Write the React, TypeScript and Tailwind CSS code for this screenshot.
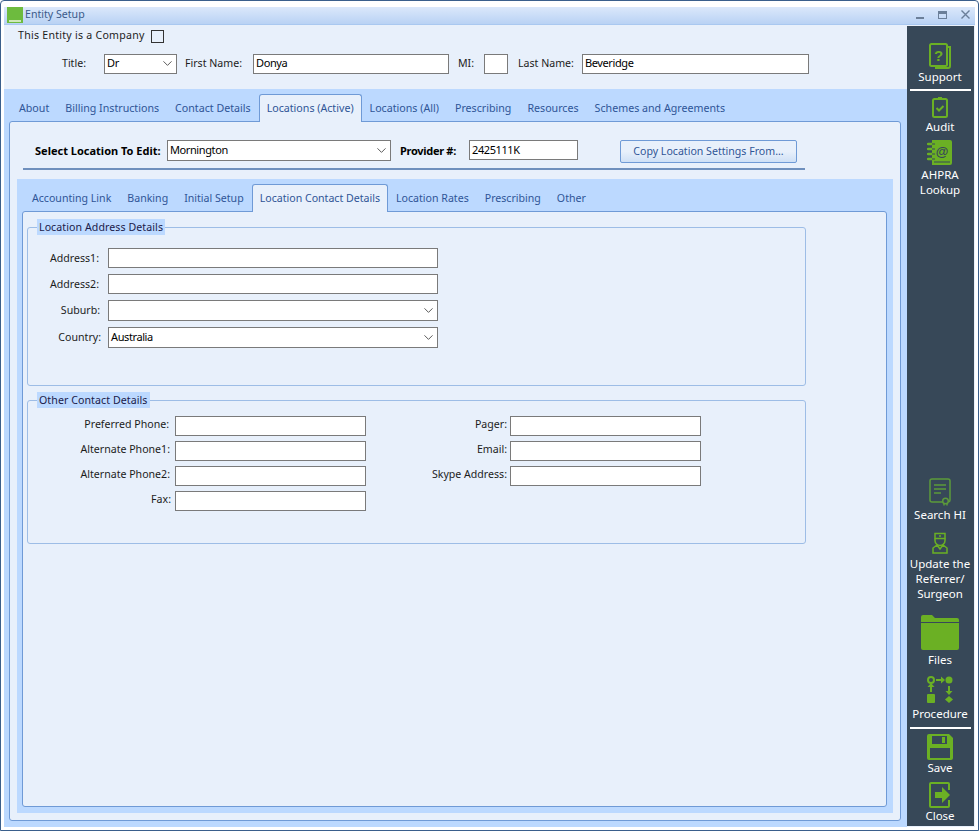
import { ChevronDown } from "lucide-react";

const tabCls = "px-2 pt-[2px] h-[27px] flex items-center text-[#2f5597]";
const activeTabCls =
  "px-[7px] pt-px h-[28px] -mb-px flex items-center text-[#2f5597] bg-[#e8f0fb] border border-b-0 border-[#6f9ad6] rounded-t-[3px] relative";

function Tabs({ items, active, className = "" }: { items: string[]; active: string; className?: string }) {
  return (
    <div className={`flex items-end pl-[2px] h-[27px] relative z-10 ${className}`}>
      {items.map((t) =>
        t === active ? (
          <div key={t} className={activeTabCls}>
            {t}
          </div>
        ) : (
          <div key={t} className={tabCls}>
            {t}
          </div>
        ),
      )}
    </div>
  );
}

function Input({ w, value, h = "h-5" }: { w: string; value?: string; h?: string }) {
  return (
    <div
      className={`${w} ${h} shrink-0 bg-white border border-[#7a7a7a] flex items-center pl-[2px] font-['Liberation_Sans',Arial,sans-serif] text-[11px] tracking-[-0.4px] text-black`}
    >
      {value}
    </div>
  );
}

function Select({ w, value, h = "h-[21px]" }: { w: string; value?: string; h?: string }) {
  return (
    <div
      className={`${w} ${h} shrink-0 bg-white border border-[#7a7a7a] flex items-center justify-between pl-[2px] pr-[1px] font-['Liberation_Sans',Arial,sans-serif] text-[11px] tracking-[-0.4px] text-black`}
    >
      <span>{value}</span>
      <ChevronDown size={15} strokeWidth={1.4} className="text-[#444]" />
    </div>
  );
}

function Field({ label, children, lw }: { label: string; children: React.ReactNode; lw: string }) {
  return (
    <div className="flex items-center">
      <div className={`${lw} text-right whitespace-nowrap`}>{label}</div>
      {children}
    </div>
  );
}

function Group({ title, className, children }: { title: string; className: string; children: React.ReactNode }) {
  return (
    <fieldset className={`border border-[#9dbde6] rounded-[3px] ml-[4px] w-[779px] ${className}`}>
      <legend className="ml-[9px] h-4 px-[2px] bg-[#bcd9ff] leading-4 text-[#1a1a4a] tracking-[0.08px]">{title}</legend>
      {children}
    </fieldset>
  );
}

const G = "#6bb024";

function Support() {
  return (
    <svg width="22" height="26" viewBox="0 0 22 26" fill="none" stroke={G} strokeWidth="2">
      <path d="M18 4h3v19a2 2 0 0 1-2 2H7v-2" />
      <rect x="1" y="1" width="17" height="22" rx="1.5" />
      <text x="9.5" y="18" fontSize="15" fontWeight="700" textAnchor="middle" fill={G} stroke="none" fontFamily="Liberation Sans">?</text>
    </svg>
  );
}
function Audit() {
  return (
    <svg width="16" height="22" viewBox="0 0 16 22" fill="none" stroke={G} strokeWidth="2">
      <rect x="1" y="3" width="14" height="18" rx="1.5" />
      <path d="M6 2.5h4" strokeWidth="3" />
      <path d="M4.5 12l2.5 2.5 4.500-4.500" />
    </svg>
  );
}
function Ahpra() {
  return (
    <svg width="26" height="27" viewBox="0 0 26 27">
      <path d="M5 1h18a2 2 0 0 1 2 2v21a2 2 0 0 1-2 2H5z" fill={G} />
      <path d="M23 23H7" stroke="#374858" strokeWidth="1" />
      <path d="M1 5h6M1 10h6M1 15h6M1 20h6" stroke={G} strokeWidth="2.5" strokeLinecap="round" />
      <path d="M5 5h3M5 10h3M5 15h3M5 20h3" stroke="#374858" strokeWidth="1" />
      <text x="15" y="17" fontSize="13" fontWeight="700" textAnchor="middle" fill="#374858" fontFamily="Liberation Sans">@</text>
    </svg>
  );
}
function SearchHi() {
  return (
    <svg width="22" height="28" viewBox="0 0 22 28" fill="none" stroke="#5c9a3a" strokeWidth="1.5">
      <path d="M14 24H3a2 2 0 0 1-2-2V3a2 2 0 0 1 2-2h16a2 2 0 0 1 2 2v19a2 2 0 0 1-1.5 2" />
      <path d="M5 7h12M5 11h12M5 15h7" />
      <circle cx="16.5" cy="23" r="2.8" />
      <path d="M15 26v1.500M18 26v1.500" />
    </svg>
  );
}
function Surgeon() {
  return (
    <svg width="16" height="22" viewBox="0 0 16 22" fill="none" stroke={G} strokeWidth="1.5">
      <path d="M3 1.500h10v5H3z" />
      <path d="M3 6.500v2a5 5 0 0 0 10 0v-2" />
      <circle cx="8" cy="4" r="1" fill={G} stroke="none" />
      <path d="M5 13l-4 3v5h14v-5l-4-3-3 4z" />
    </svg>
  );
}
function Folder() {
  return (
    <svg width="38" height="36" viewBox="0 0 38 36" fill={G}>
      <path d="M0 3a2 2 0 0 1 2-2h9l3 3h22a2 2 0 0 1 2 2v2H0z" />
      <path d="M0 9h38v25a2 2 0 0 1-2 2H2a2 2 0 0 1-2-2z" />
    </svg>
  );
}
function Procedure() {
  return (
    <svg width="28" height="27" viewBox="0 0 28 27" fill={G}>
      <circle cx="5" cy="4" r="3" fill="none" stroke={G} strokeWidth="2" />
      <circle cx="23" cy="4" r="3.5" />
      <path d="M10 3h5V0.5l4 3.500-4 3.500V5h-5z" />
      <path d="M22 10h2v5h2.500l-3.500 4-3.500-4H22z" />
      <path d="M23 20l4 3.500-4 3.500-4-3.500z" />
      <path d="M4 16v-5H1.500l3.500-4 3.500 4H6v5z" />
      <rect x="1" y="18" width="8" height="9" rx="1" />
    </svg>
  );
}
function Save() {
  return (
    <svg width="26" height="26" viewBox="0 0 26 26">
      <path d="M2 0h20l4 4v20a2 2 0 0 1-2 2H2a2 2 0 0 1-2-2V2a2 2 0 0 1 2-2z" fill={G} />
      <rect x="5" y="2" width="15" height="8" fill="#374858" />
      <rect x="15" y="3" width="3" height="6" fill={G} />
      <rect x="3" y="14" width="20" height="10" fill="#374858" />
    </svg>
  );
}
function Close() {
  return (
    <svg width="22" height="26" viewBox="0 0 22 26" fill="none">
      <path d="M20 8V2a1 1 0 0 0-1-1H2a1 1 0 0 0-1 1v22a1 1 0 0 0 1 1h17a1 1 0 0 0 1-1v-6" stroke={G} strokeWidth="2" />
      <path d="M6 10h7V5l8 8-8 8v-5H6z" fill={G} />
    </svg>
  );
}

function SideItem({ icon, label, className }: { icon: React.ReactNode; label: React.ReactNode; className: string }) {
  return (
    <div className={`flex flex-col items-center text-center leading-[15px] text-white ${className}`}>
      {icon}
      {label}
    </div>
  );
}

export default function App() {
  return (
    <div className="w-[979px] h-[831px] border border-[#3a5f8c] rounded-t-[4px] bg-white pt-[6px] px-[3px] pb-[3px] flex flex-col font-['Noto_Sans',sans-serif] text-[10.6px] text-[#1c1c1c] overflow-hidden">
      {/* title bar */}
      <div className="h-[18px] shrink-0 flex items-center bg-gradient-to-b from-[#dbe8fb] to-[#b9d2f4] border-b border-[#a9c8f0] pl-[3px] pr-[5px] pb-[2px]">
        <div className="w-4 h-4 shrink-0 bg-[#6dbb3e] flex items-end justify-center">
          <div className="w-3 h-[2px] mb-px bg-[#cfe8b8]" />
        </div>
        <span className="ml-[2px] text-[#3a5a8a]">Entity Setup</span>
        <div className="ml-auto flex items-center gap-[14px]">
          <div className="w-2 h-[2px] bg-[#6b7f99] mt-[6px]" />
          <div className="w-[9px] h-2 border border-[#6b7f99] border-t-[3px]" />
          <svg width="9" height="9" viewBox="0 0 9 9" stroke="#6b7f99" strokeWidth="1.4">
            <path d="M0.5 0.5l8 8M8.5 0.5l-8 8" />
          </svg>
        </div>
      </div>

      <div className="flex-1 flex bg-[#e8f0fb] min-h-0 pt-px">
        <div className="flex-1 flex flex-col min-w-0 -mt-px">
          {/* entity header */}
          <div className="h-[64px] shrink-0">
            <div className="flex items-center pl-[14px] h-[22px]">
              <span className="tracking-[0.25px]">This Entity is a Company</span>
              <div className="w-[13px] h-[13px] ml-[6px] mt-px bg-[#e8f0fb] border border-[#333]" />
            </div>
            <div className="flex items-center mt-[6px] h-[21px]">
              <span className="ml-[58px] w-[42px]">Title:</span>
              <Select w="w-[73px]" value="Dr" h="h-5" />
              <span className="ml-2 w-[68px]">First Name:</span>
              <Input w="w-[196px]" value="Donya" />
              <span className="ml-[9px] w-[26px]">MI:</span>
              <Input w="w-6" />
              <span className="ml-[10px] w-[64px] pt-px">Last Name:</span>
              <Input w="w-[227px]" value="Beveridge" />
            </div>
          </div>

          {/* outer tabs */}
          <div className="flex-1 min-h-0 flex flex-col bg-[#bcd9ff] pl-[5px] pr-[6px] pt-[5px] pb-[6px]">
            <Tabs
              className="text-[10.66px]"
              active="Locations (Active)"
              items={["About", "Billing Instructions", "Contact Details", "Locations (Active)", "Locations (All)", "Prescribing", "Resources", "Schemes and Agreements"]}
            />
            <div className="flex-1 min-h-0 flex flex-col bg-[#e8f0fb] border border-[#6f9ad6] rounded-[3px] px-[7px] pb-[7px]">
              <div className="h-[48px] shrink-0 mx-[6px] w-[782px] border-b-2 border-[#6f90bd] flex items-start pt-[18px]">
                <span className="ml-3 w-[132px] font-bold text-black font-['Liberation_Sans',Arial,sans-serif] text-[11px] leading-[21px]">Select Location To Edit:</span>
                <Select w="w-[224px]" value="Mornington" />
                <span className="ml-[9px] w-[69px] font-bold text-black font-['Liberation_Sans',Arial,sans-serif] text-[11px] tracking-[-0.3px] leading-[21px]">Provider #:</span>
                <Input w="w-[109px]" value="2425111K" />
                <button className="ml-[42px] w-[177px] h-[23px] rounded-[2px] border border-[#6f9ad6] bg-gradient-to-b from-[#e8f0fb] via-[#e8f0fb] to-[#cfe0f6] text-[#2f5597]">
                  Copy Location Settings From...
                </button>
              </div>

              {/* inner tabs */}
              <div className="flex-1 min-h-0 mt-[9px] flex flex-col bg-[#bcd9ff] pl-[5px] pr-[6px] pt-[5px] pb-[6px]">
                <Tabs
                  active="Location Contact Details"
                  items={["Accounting Link", "Banking", "Initial Setup", "Location Contact Details", "Location Rates", "Prescribing", "Other"]}
                />
                <div className="flex-1 min-h-0 bg-[#e8f0fb] border border-[#6f9ad6] rounded-[3px] pt-[7px]">
                  <Group title="Location Address Details" className="h-[167px]">
                    <div className="flex flex-col gap-[6px] pt-[13px]">
                      <Field label="Address1:" lw="w-[72px] pr-[1px] pt-px">
                        <Input w="w-[330px] ml-[8px]" />
                      </Field>
                      <Field label="Address2:" lw="w-[72px] pr-[1px] pt-px">
                        <Input w="w-[330px] ml-[8px]" />
                      </Field>
                      <Field label="Suburb:" lw="w-[72px] pt-px">
                        <Select w="w-[330px] ml-[8px]" />
                      </Field>
                      <Field label="Country:" lw="w-[73px]">
                        <Select w="w-[330px] ml-[7px]" value="Australia" />
                      </Field>
                    </div>
                  </Group>
                  <Group title="Other Contact Details" className="h-[152px] mt-[6px]">
                    <div className="grid grid-cols-[338px_auto] justify-start gap-y-[5px] pt-[8px]">
                      <Field label="Preferred Phone:" lw="w-[141px] pb-[2px]">
                        <Input w="w-[191px] ml-[6px]" />
                      </Field>
                      <Field label="Pager:" lw="w-[141px] pb-[2px]">
                        <Input w="w-[191px] ml-[3px]" />
                      </Field>
                      <Field label="Alternate Phone1:" lw="w-[142px] pb-[2px]">
                        <Input w="w-[191px] ml-[5px]" />
                      </Field>
                      <Field label="Email:" lw="w-[141px] pb-[2px]">
                        <Input w="w-[191px] ml-[3px]" />
                      </Field>
                      <Field label="Alternate Phone2:" lw="w-[142px] pb-[2px]">
                        <Input w="w-[191px] ml-[5px]" />
                      </Field>
                      <Field label="Skype Address:" lw="w-[141px] pb-[2px]">
                        <Input w="w-[191px] ml-[3px]" />
                      </Field>
                      <Field label="Fax:" lw="w-[143px] pb-[2px]">
                        <Input w="w-[191px] ml-[4px]" />
                      </Field>
                    </div>
                  </Group>
                </div>
              </div>
            </div>
          </div>
        </div>

        {/* right action bar */}
        <div className="w-[67px] shrink-0 mr-px mb-px pr-px bg-[#374858] flex flex-col justify-between text-[11.5px]">
          <div className="flex flex-col items-center pt-[17px]">
            <SideItem icon={<Support />} label={<span>Support</span>} className="" />
            <div className="w-[61px] h-[2px] bg-white mt-[5px]" />
            <SideItem icon={<Audit />} label={<span className="mt-px">Audit</span>} className="mt-[5px]" />
            <SideItem icon={<Ahpra />} label={<span className="mt-px">AHPRA<br />Lookup</span>} className="mt-[5px]" />
          </div>
          <div className="flex flex-col items-center pb-[3px]">
            <SideItem icon={<SearchHi />} label={<span className="mt-[1px]">Search HI</span>} className="" />
            <SideItem icon={<Surgeon />} label={<span className="mt-[2px]">Update the<br />Referrer/<br />Surgeon</span>} className="mt-[10px]" />
            <SideItem icon={<Folder />} label={<span className="mt-[2px]">Files</span>} className="mt-[13px]" />
            <SideItem icon={<Procedure />} label={<span className="mt-[3px]">Procedure</span>} className="mt-[9px]" />
            <div className="w-[61px] h-[2px] bg-white mt-[6px]" />
            <SideItem icon={<Save />} label={<span>Save</span>} className="mt-[5px]" />
            <SideItem icon={<Close />} label={<span>Close</span>} className="mt-[7px]" />
          </div>
        </div>
      </div>
    </div>
  );
}
